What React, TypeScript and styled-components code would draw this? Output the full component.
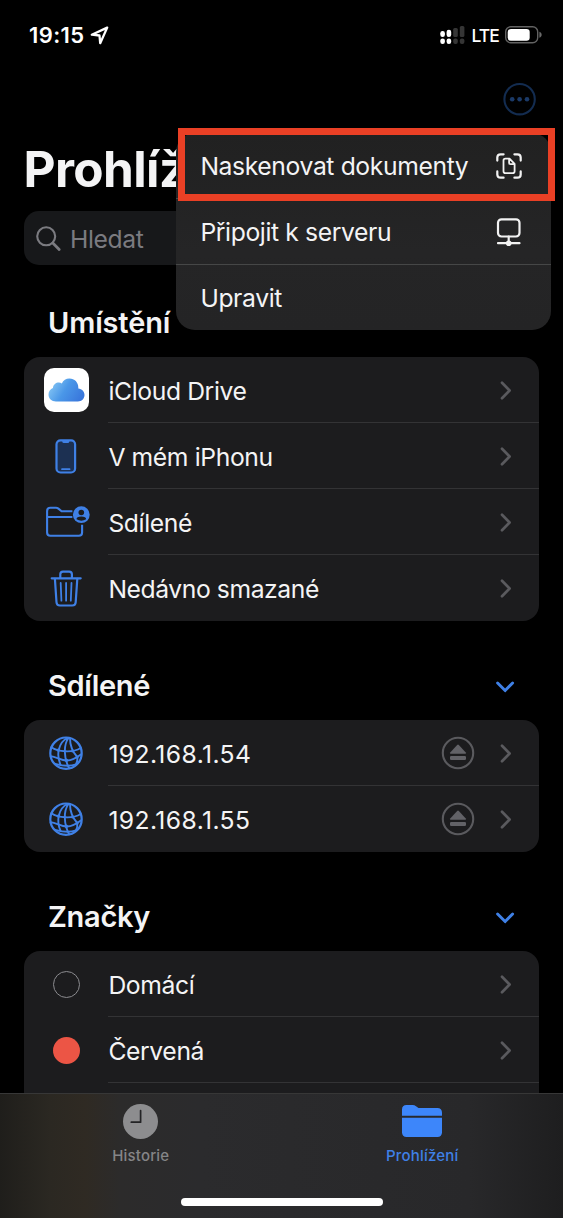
import React from "react";
import styled, { createGlobalStyle } from "styled-components";

const BLUE = "#3f80e6";

const GlobalStyle = createGlobalStyle`
  * { box-sizing: border-box; }
  html, body { margin: 0; background: #000; }
  body { font-family: Inter, "Noto Sans", sans-serif; color: #f4f4f5; }
  svg { display: block; overflow: visible; flex: none; }
`;

const Screen = styled.div`
  position: relative;
  width: 563px;
  height: 1218px;
  display: flex;
  flex-direction: column;
  overflow: hidden;
  background: #000;
`;

const StatusBar = styled.header`
  height: 70px;
  flex: none;
  display: flex;
  justify-content: space-between;
  padding: 0 21px 0 29px;
`;

const StatusGroup = styled.div<{ $gap: number }>`
  display: flex;
  align-items: center;
  height: 70px;
  gap: ${(p) => p.$gap}px;
`;

const Clock = styled.span`
  font-size: 22px;
  font-weight: 600;
  letter-spacing: 0.4px;
  color: #fff;
`;

const Carrier = styled.span`
  font-size: 17.5px;
  font-weight: 500;
  letter-spacing: -0.9px;
  color: #fff;
`;

const NavRow = styled.div`
  height: 59px;
  flex: none;
  display: flex;
  justify-content: flex-end;
  padding: 12px 26px 0 0;
`;

const Title = styled.h1`
  margin: 0;
  height: 82px;
  flex: none;
  padding-left: 23.5px;
  font-size: 49.5px;
  line-height: 80px;
  font-weight: 700;
  letter-spacing: -0.6px;
`;

const SearchField = styled.div`
  height: 54px;
  flex: none;
  margin: 0 24px;
  padding-left: 11px;
  border-radius: 15px;
  background: #17181a;
  display: flex;
  align-items: center;
  gap: 8px;
  font-size: 24.7px;
  letter-spacing: -0.4px;
  color: #7b7b80;
`;

const Placeholder = styled.span`
  padding-top: 2px;
`;

const SectionHeader = styled.div<{ $height: number }>`
  height: ${(p) => p.$height}px;
  flex: none;
  display: flex;
  align-items: flex-end;
  justify-content: space-between;
  padding: 0 48px 15px 48px;
`;

const SectionTitle = styled.h2<{ $spacing?: number }>`
  margin: 0;
  font-size: 29px;
  line-height: 38px;
  font-weight: 600;
  letter-spacing: ${(p) => p.$spacing ?? -0.3}px;
`;

const HeaderChevron = styled.div`
  height: 36px;
  display: flex;
  align-items: center;
`;

const Card = styled.section`
  flex: none;
  margin: 0 24px;
  border-radius: 16px;
  background: #1c1c1e;
`;

const Row = styled.div`
  height: 66px;
  display: flex;
`;

const IconCell = styled.div`
  width: 84px;
  display: flex;
  align-items: center;
  justify-content: center;
`;

const RowBody = styled.div<{ $last?: boolean }>`
  flex: 1;
  display: flex;
  align-items: center;
  padding: 1px 27px 0 0;
  border-bottom: 1px solid ${(p) => (p.$last ? "transparent" : "#333335")};
`;

const Label = styled.span<{ $spacing?: number }>`
  flex: 1;
  padding: 1px 0 0 0.4px;
  font-size: 24.7px;
  line-height: 34px;
  letter-spacing: ${(p) => p.$spacing ?? -0.38}px;
  white-space: nowrap;
`;

const Trailing = styled.div`
  display: flex;
  align-items: center;
  gap: 25px;
`;

const AppTile = styled.div`
  width: 45px;
  height: 44px;
  border-radius: 10px;
  background: #fff;
  display: flex;
  align-items: center;
  justify-content: center;
`;

const Tag = styled.span<{ $color?: string }>`
  width: 27px;
  height: 27px;
  border-radius: 50%;
  border: ${(p) => (p.$color ? "none" : "1.7px solid #8b8b8f")};
  background: ${(p) => p.$color ?? "transparent"};
`;

const Menu = styled.div`
  position: absolute;
  left: 176px;
  top: 133px;
  width: 375px;
  height: 197px;
  border-radius: 19px;
  overflow: hidden;
  background: linear-gradient(#212121, #252526 60%, #242425);
`;

const MenuItem = styled.div<{ $divider?: boolean }>`
  height: ${(p) => (p.$divider ? 66 : 65)}px;
  display: flex;
  align-items: center;
  padding: 0 29px 0 24px;
  border-bottom: ${(p) => (p.$divider ? "1px solid #464747" : "none")};
`;

const Highlight = styled.div`
  position: absolute;
  left: 178px;
  top: 128px;
  width: 377px;
  height: 73px;
  border: 7px solid #ea4025;
`;

const TabBar = styled.nav`
  position: absolute;
  left: 0;
  right: 0;
  bottom: 0;
  height: 125px;
  border-top: 1px solid #373737;
  display: grid;
  grid-template-columns: 1fr 1fr;
  background: linear-gradient(90deg, #1f1e1b 0, #2b2822 50px, #2f2a23 85px, #2c2b2b 120px, #2b2b2d 200px, #28282a 470px, #1e1e1f 563px);
`;

const Tab = styled.div<{ $active?: boolean }>`
  display: flex;
  flex-direction: column;
  align-items: center;
  padding-top: 8px;
  color: ${(p) => (p.$active ? BLUE : "#858587")};
`;

const TabIcon = styled.div`
  height: 38px;
  display: flex;
  align-items: center;
`;

const TabLabel = styled.span`
  margin-top: 6px;
  font-size: 15px;
  line-height: 20px;
  font-weight: 500;
  letter-spacing: 0.2px;
`;

const HomeIndicator = styled.div`
  position: absolute;
  left: 181px;
  bottom: 12px;
  width: 202px;
  height: 8px;
  border-radius: 4px;
  background: #fff;
`;

const LocationIcon = () => (
  <svg width="19" height="19" viewBox="0 0 19 19" fill="none" stroke="#fff" strokeWidth="2.3" strokeLinejoin="round">
    <path d="M17.2 1.6 1.8 8.7 9.5 9.5 10.2 17.2Z" />
  </svg>
);

const SignalIcon = () => (
  <svg width="25" height="18" viewBox="0 0 25 18">
    <g fill="#fff">
      <rect x="0.3" y="5" width="4.6" height="6" rx="2.2" />
      <rect x="6.6" y="3.8" width="4.6" height="7.2" rx="2.2" />
      <rect x="0.3" y="12.5" width="4.6" height="5.4" rx="2.2" />
      <rect x="6.6" y="12.5" width="4.6" height="5.4" rx="2.2" />
    </g>
    <g fill="#353535">
      <rect x="13.2" y="2" width="4.6" height="9" rx="1.5" />
      <rect x="19.8" y="0" width="4.6" height="11" rx="1.5" />
      <rect x="13.2" y="12.5" width="4.6" height="5.4" rx="2" />
      <rect x="19.8" y="12.5" width="4.6" height="5.4" rx="2" />
    </g>
  </svg>
);

const BatteryIcon = () => (
  <svg width="37" height="18" viewBox="0 0 37 18">
    <rect x="0.7" y="0.8" width="32" height="16" rx="5" fill="none" stroke="#626262" strokeWidth="1.4" />
    <rect x="2.7" y="2.9" width="22" height="11.8" rx="3.2" fill="#fff" />
    <path d="M34.4 5.8c3 .8 3 5.2 0 6Z" fill="#6a6a6a" />
  </svg>
);

const MoreIcon = () => (
  <svg width="34" height="34" viewBox="0 0 34 34">
    <circle cx="16.6" cy="17.2" r="15.2" fill="none" stroke="#132c50" strokeWidth="2.1" />
    <g fill="#1b3a68">
      <circle cx="9.2" cy="17.2" r="2.3" />
      <circle cx="16.6" cy="17.2" r="2.3" />
      <circle cx="24" cy="17.2" r="2.3" />
    </g>
  </svg>
);

const SearchIcon = () => (
  <svg width="27" height="27" viewBox="0 0 27 27" fill="none" stroke="#7b7b80" strokeLinecap="round">
    <circle cx="11.2" cy="11.3" r="9" strokeWidth="2.1" />
    <path d="M17.8 18.1 24.2 24.6" strokeWidth="2.8" />
  </svg>
);

const ScanIcon = () => (
  <svg width="26" height="26" viewBox="0 0 26 26" fill="none" stroke="#f2f2f2" strokeWidth="2.2" strokeLinecap="round" strokeLinejoin="round">
    <path d="M1.3 7.6V4.6Q1.3 1.3 4.6 1.3H7.6M18.4 1.3h3q3.3 0 3.3 3.3v3M24.7 18.4v3q0 3.3-3.3 3.3h-3M7.6 24.7h-3q-3.3 0-3.3-3.3v-3" />
    <path d="M9.4 5.6h4.1l5.1 5.3v7.4q0 1.9-1.9 1.9H9.4q-1.9 0-1.9-1.9V7.5q0-1.9 1.9-1.9ZM13.1 6v3.7q0 1.5 1.5 1.5h3.7" strokeWidth="1.8" />
  </svg>
);

const ServerIcon = () => (
  <svg width="26" height="28" viewBox="0 0 26 28" fill="none" stroke="#f2f2f2" strokeWidth="2.2" strokeLinecap="round">
    <rect x="2" y="1.3" width="21.5" height="17.2" rx="3.5" />
    <path d="M12.7 18.5V26M2 25.2H23.5" />
    <circle cx="12.7" cy="25.2" r="2.8" fill="#f2f2f2" stroke="none" />
  </svg>
);

const ChevronRight = () => (
  <svg width="12" height="19" viewBox="0 0 12 19" fill="none" stroke="#5a5a5e" strokeWidth="2.7" strokeLinecap="round" strokeLinejoin="round">
    <path d="M2 1.8 9.6 9.5 2 17.2" />
  </svg>
);

const ChevronDown = () => (
  <svg width="20" height="12" viewBox="0 0 20 12" fill="none" stroke={BLUE} strokeWidth="2.9" strokeLinecap="round" strokeLinejoin="round">
    <path d="M2.6 2 10.1 9.6 17.6 2" />
  </svg>
);

const CloudIcon = () => (
  <svg width="37" height="24" viewBox="0 0 37 24">
    <defs>
      <linearGradient id="cloud" x1="0" y1="0.2" x2="1" y2="0.6">
        <stop offset="0" stopColor="#8ccbf5" />
        <stop offset="0.5" stopColor="#4a97e8" />
        <stop offset="1" stopColor="#3a78dc" />
      </linearGradient>
    </defs>
    <path
      d="M8 23.5C3.5 23.5.5 20.5.5 16.500c0-3.200 1.900-5.500 4.400-6.500C5.300 6.600 8 4.600 10.800 4.600c1.200 0 2.200.3 3 .8C15.300 2.400 18 .5 21.400.5c5.200 0 8.900 4 8.900 8.900v1.100c3.500.3 6.200 3 6.200 6.500 0 3.700-2.900 6.500-6.600 6.500Z"
      fill="url(#cloud)"
    />
  </svg>
);

const PhoneIcon = () => (
  <svg width="22" height="35" viewBox="0 0 22 35" fill="none" stroke={BLUE} strokeWidth="2.2">
    <rect x="1.5" y="1.3" width="18.6" height="32.2" rx="4" fill="#1c3052" />
    <path d="M7.3 1.8v.6q0 1.6 1.6 1.6h3.8q1.6 0 1.6-1.6v-.6Z" fill={BLUE} stroke="none" />
    <path d="M7 30.200h7.600" strokeWidth="1.700" strokeLinecap="round" />
  </svg>
);

const SharedFolderIcon = () => (
  <svg width="44" height="32" viewBox="0 0 44 32" fill="none" stroke={BLUE} strokeWidth="2.1" strokeLinejoin="round">
    <path d="M28.400 5.300H17.600L14.400 2.600Q13.300 1.700 12 1.700H6.400Q3.100 1.700 3.100 5V26.400Q3.100 29.700 6.400 29.700H34.800Q38.100 29.700 38.100 26.400V18.700M3.100 11H28.400" />
    <circle cx="37.300" cy="8.700" r="8.400" fill={BLUE} stroke="none" />
    <circle cx="37.300" cy="6.500" r="2.800" fill="#1c1c1e" stroke="none" />
    <path d="M32.500 13.300q0-2.700 4.800-2.700t4.800 2.700q-4.800 2.700-9.600 0Z" fill="#1c1c1e" stroke="none" />
  </svg>
);

const TrashIcon = () => (
  <svg width="32" height="37" viewBox="0 0 32 37" fill="none" stroke={BLUE} strokeWidth="2.200" strokeLinecap="round" strokeLinejoin="round">
    <path d="M1.700 8.300H30.700M10.300 7.800V4.300Q10.300 1.600 13 1.600H19.200Q21.900 1.600 21.900 4.300V7.800" />
    <path d="M4.900 8.800 6.500 32.300Q6.700 35.500 9.900 35.500H22.300Q25.500 35.500 25.700 32.300L27.300 8.800" />
    <path d="M10.700 13 11.400 30.700M16.100 13V30.700M21.500 13 20.800 30.700" strokeWidth="1.800" />
  </svg>
);

const GlobeIcon = () => (
  <svg width="34" height="34" viewBox="0 0 34 34" fill="none" stroke={BLUE} strokeWidth="1.900" strokeLinecap="round">
    <circle cx="17" cy="17.200" r="15.700" strokeWidth="2.200" />
    <path d="M18.200 2C10.500 6 6.500 17.500 11.600 29M19.500 2C14.500 8.500 14.500 22 20.200 32.200M21 2.200C21 8.500 22.500 14.500 28.200 21M28.200 21C28.700 23.500 28 26.500 26.800 28.700" />
    <path d="M2.300 11.300C9 15.800 23.500 17.200 31.700 12M1.700 20.200C7 20.600 12 24.300 17.600 24.500S28 21.500 32.200 18.300M6.200 27.800C12 29.400 20 31 27 28.300" />
    <circle cx="9.300" cy="14.100" r="1.700" fill={BLUE} stroke="none" />
    <circle cx="17.300" cy="24.300" r="1.800" fill={BLUE} stroke="none" />
    <circle cx="23.700" cy="14.900" r="1.500" fill={BLUE} stroke="none" />
    <circle cx="28.200" cy="21" r="1.500" fill={BLUE} stroke="none" />
  </svg>
);

const EjectIcon = () => (
  <svg width="34" height="34" viewBox="0 0 34 34" fill="#626267">
    <circle cx="17" cy="17" r="15.200" fill="none" stroke="#5a5a5e" strokeWidth="2.100" />
    <path d="M16.200 8.900q.8-.8 1.600 0l7 7.500q.8 1.300-.7 1.300H9.900q-1.500 0-.7-1.300Z" />
    <rect x="9" y="19.900" width="16" height="4" rx="1.200" />
  </svg>
);

const HistoryIcon = () => (
  <svg width="35" height="35" viewBox="0 0 35 35">
    <circle cx="17.500" cy="17.500" r="17.500" fill="#8d8d8f" />
    <path d="M17.600 6.500V18.200H8.300" fill="none" stroke="#232325" strokeWidth="1.700" strokeLinecap="round" strokeLinejoin="round" />
  </svg>
);

const FolderIcon = () => (
  <svg width="40" height="32" viewBox="0 0 40 32" fill="#3d86fa">
    <path d="M0 10.800V4.500Q0 0 4.500 0H10.500Q12.600 0 14 1.200L16.500 3.100H35.300Q40 3.100 40 7.800V10.800Z" />
    <path d="M0 12.800H40V27.300Q40 32 35.300 32H4.700Q0 32 0 27.300Z" />
  </svg>
);

type RowProps = {
  icon: React.ReactNode;
  label: string;
  spacing?: number;
  last?: boolean;
  ejectable?: boolean;
};

const ListRow = ({ icon, label, spacing, last, ejectable }: RowProps) => (
  <Row>
    <IconCell>{icon}</IconCell>
    <RowBody $last={last}>
      <Label $spacing={spacing}>{label}</Label>
      <Trailing>
        {ejectable && <EjectIcon />}
        <ChevronRight />
      </Trailing>
    </RowBody>
  </Row>
);

export default function App() {
  return (
    <>
      <GlobalStyle />
      <Screen>
        <StatusBar>
          <StatusGroup $gap={5}>
            <Clock>19:15</Clock>
            <LocationIcon />
          </StatusGroup>
          <StatusGroup $gap={6}>
            <SignalIcon />
            <Carrier>LTE</Carrier>
            <BatteryIcon />
          </StatusGroup>
        </StatusBar>
        <NavRow>
          <MoreIcon />
        </NavRow>
        <Title>Prohlížení</Title>
        <SearchField>
          <SearchIcon />
          <Placeholder>Hledat</Placeholder>
        </SearchField>

        <SectionHeader $height={92}>
          <SectionTitle $spacing={-0.15}>Umístění</SectionTitle>
        </SectionHeader>
        <Card>
          <ListRow icon={<AppTile><CloudIcon /></AppTile>} label="iCloud Drive" />
          <ListRow icon={<PhoneIcon />} label="V mém iPhonu" />
          <ListRow icon={<SharedFolderIcon />} label="Sdílené" />
          <ListRow icon={<TrashIcon />} label="Nedávno smazané" spacing={-0.42} last />
        </Card>

        <SectionHeader $height={99}>
          <SectionTitle>Sdílené</SectionTitle>
          <HeaderChevron><ChevronDown /></HeaderChevron>
        </SectionHeader>
        <Card>
          <ListRow icon={<GlobeIcon />} label="192.168.1.54" spacing={0.4} ejectable />
          <ListRow icon={<GlobeIcon />} label="192.168.1.55" spacing={0.4} ejectable last />
        </Card>

        <SectionHeader $height={99}>
          <SectionTitle>Značky</SectionTitle>
          <HeaderChevron><ChevronDown /></HeaderChevron>
        </SectionHeader>
        <Card>
          <ListRow icon={<Tag />} label="Domácí" />
          <ListRow icon={<Tag $color="#ec5545" />} label="Červená" />
          <Row />
        </Card>

        <TabBar>
          <Tab>
            <TabIcon><HistoryIcon /></TabIcon>
            <TabLabel>Historie</TabLabel>
          </Tab>
          <Tab $active>
            <TabIcon><FolderIcon /></TabIcon>
            <TabLabel>Prohlížení</TabLabel>
          </Tab>
        </TabBar>
        <HomeIndicator />

        <Menu>
          <MenuItem $divider>
            <Label>Naskenovat dokumenty</Label>
            <ScanIcon />
          </MenuItem>
          <MenuItem $divider>
            <Label>Připojit k serveru</Label>
            <ServerIcon />
          </MenuItem>
          <MenuItem>
            <Label>Upravit</Label>
          </MenuItem>
        </Menu>
        <Highlight />
      </Screen>
    </>
  );
}
